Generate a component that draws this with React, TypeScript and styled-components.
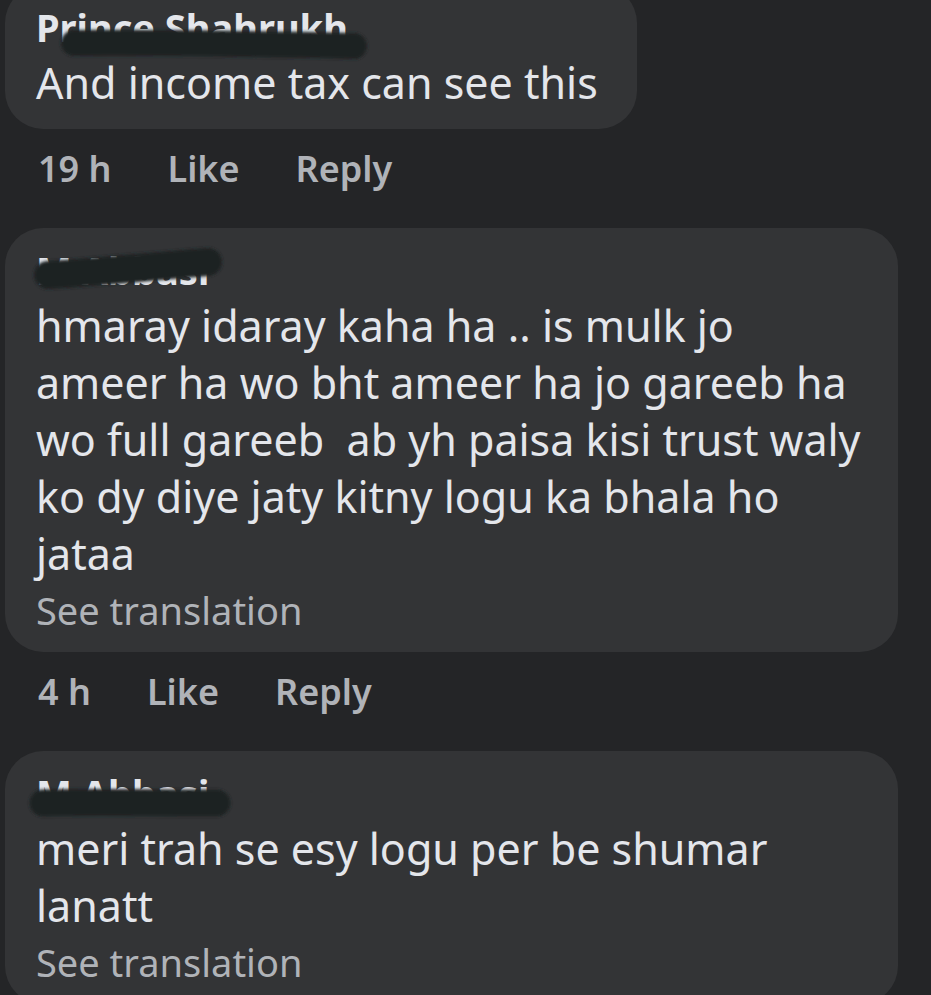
import React, { useId } from 'react';
import styled, { createGlobalStyle } from 'styled-components';

const GlobalStyle = createGlobalStyle`
  html, body {
    margin: 0;
    padding: 0;
    background: #242527;
    overflow: hidden;
  }
  body {
    font-family: 'Noto Sans', 'Open Sans', sans-serif;
    -webkit-font-smoothing: antialiased;
  }
`;

const Thread = styled.div`
  display: flex;
  flex-direction: column;
  align-items: flex-start;
  padding: 0 0 0 5px;
  margin-top: -15px;
  height: 1010px;
  overflow: hidden;
`;

const Bubble = styled.div<{ $wide?: boolean }>`
  box-sizing: border-box;
  background: #333436;
  border-radius: 38px;
  padding: 19px 39px 18px 31px;
  width: ${(p) => (p.$wide ? '893px' : 'auto')};
  display: flex;
  flex-direction: column;
  flex-shrink: 0;
`;

const NameRow = styled.div`
  position: relative;
  align-self: flex-start;
`;

const Name = styled.div`
  font-size: 38px;
  line-height: 46px;
  font-weight: 700;
  color: #e4e6eb;
  white-space: nowrap;
`;

const Scribble = styled.svg`
  position: absolute;
  left: 0;
  top: 0;
  overflow: visible;
  pointer-events: none;
`;

const Body = styled.div`
  font-size: 43px;
  line-height: 57px;
  color: #e4e6eb;
  white-space: pre;
  margin-top: 4px;
`;

const Translate = styled.div`
  font-size: 38px;
  line-height: 48px;
  color: #b0b3b8;
  margin-top: 4px;
`;

const Actions = styled.div`
  display: flex;
  gap: 56px;
  padding: 20px 0 39px 33px;
  font-size: 36px;
  line-height: 40px;
  font-weight: 600;
  color: #b0b3b8;
`;

type Mark = { d: string; w: number };

const Redacted = ({ name, mark }: { name: string; mark: Mark }) => {
  const id = useId().replace(/:/g, '');
  return (
    <NameRow>
      <Name>{name}</Name>
      <Scribble width="400" height="80">
        <defs>
          <filter id={`soft${id}`} filterUnits="userSpaceOnUse" x="-60" y="-40" width="520" height="160">
            <feGaussianBlur stdDeviation="1.4" />
          </filter>
        </defs>
        <path
          d={mark.d}
          stroke="#1f2022"
          strokeWidth={mark.w}
          strokeLinecap="round"
          fill="none"
          filter={`url(#soft${id})`}
        />
      </Scribble>
    </NameRow>
  );
};

type Comment = {
  name: string;
  mark: Mark;
  text: string;
  wide?: boolean;
  translate?: boolean;
  time?: string;
};

const comments: Comment[] = [
  {
    name: 'Prince Shahrukh',
    mark: { d: 'M38 39 C 120 38, 220 40, 318 42', w: 26 },
    text: 'And income tax can see this',
    time: '19 h',
  },
  {
    name: 'M Abbasi',
    mark: { d: 'M12 28 C 60 25, 120 19, 172 15', w: 28 },
    text:
      'hmaray idaray kaha ha .. is mulk jo\nameer ha wo bht ameer ha jo gareeb ha\nwo full gareeb  ab yh paisa kisi trust waly\nko dy diye jaty kitny logu ka bhala ho\njataa',
    wide: true,
    translate: true,
    time: '4 h',
  },
  {
    name: 'M Abbasi',
    mark: { d: 'M7 33 C 60 32, 120 33, 181 33', w: 27 },
    text: 'meri trah se esy logu per be shumar\nlanatt',
    wide: true,
    translate: true,
  },
];

export default function App() {
  return (
    <>
      <GlobalStyle />
      <Thread>
        {comments.map((c, i) => (
          <React.Fragment key={i}>
            <Bubble $wide={c.wide}>
              <Redacted name={c.name} mark={c.mark} />
              <Body>{c.text}</Body>
              {c.translate && <Translate>See translation</Translate>}
            </Bubble>
            {c.time && (
              <Actions>
                <span>{c.time}</span>
                <span>Like</span>
                <span>Reply</span>
              </Actions>
            )}
          </React.Fragment>
        ))}
      </Thread>
    </>
  );
}
